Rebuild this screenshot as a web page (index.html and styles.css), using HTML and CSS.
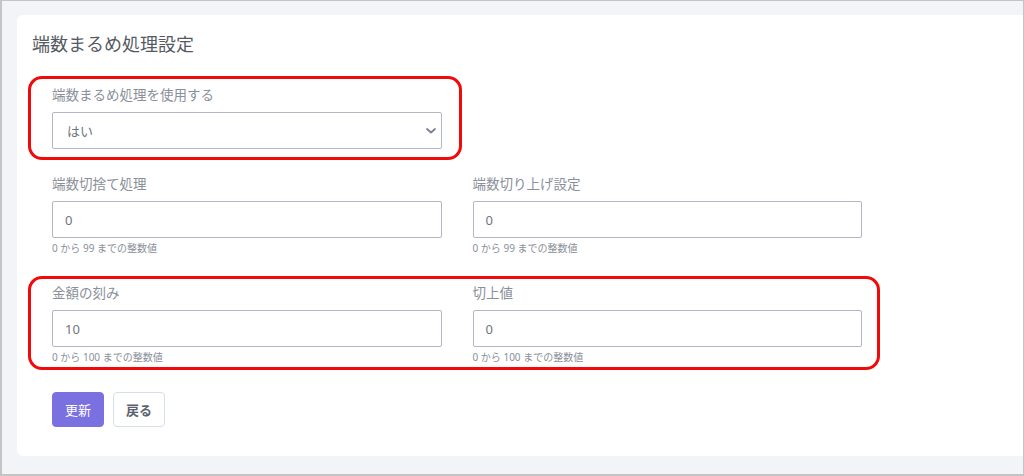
FILE: index.html
```html
<!DOCTYPE html>
<html lang="ja">

<head>
    <meta charset="UTF-8">
    <meta name="viewport" content="width=device-width, initial-scale=1.0">
    <title>端数まるめ処理設定</title>
    <link rel="stylesheet" href="styles.css">
</head>

<body>
    <div class="frame">
        <div class="card">
            <h1 class="title">端数まるめ処理設定</h1>

            <!-- 使用するかどうか -->
            <div class="group group-select marked">
                <div class="field">
                    <label class="label">端数まるめ処理を使用する</label>
                    <div class="select">
                        <span>はい</span>
                        <svg class="chevron" width="12" height="8" viewBox="0 0 12 8">
                            <path d="M2 2 L6 5.5 L10 2" fill="none" stroke="#7a7f94" stroke-width="1.8" stroke-linecap="round" stroke-linejoin="round"/>
                        </svg>
                    </div>
                </div>
            </div>

            <div class="group group-wide">
                <div class="field">
                    <label class="label">端数切捨て処理</label>
                    <div class="input">0</div>
                    <div class="help">0 から 99 までの整数値</div>
                </div>
                <div class="field">
                    <label class="label">端数切り上げ設定</label>
                    <div class="input">0</div>
                    <div class="help">0 から 99 までの整数値</div>
                </div>
            </div>

            <div class="group group-wide marked">
                <div class="field">
                    <label class="label">金額の刻み</label>
                    <div class="input">10</div>
                    <div class="help">0 から 100 までの整数値</div>
                </div>
                <div class="field">
                    <label class="label">切上値</label>
                    <div class="input">0</div>
                    <div class="help">0 から 100 までの整数値</div>
                </div>
            </div>

            <div class="actions">
                <button class="btn btn-primary">更新</button>
                <button class="btn btn-light">戻る</button>
            </div>
        </div>
    </div>
</body>

</html>
```

FILE: styles.css
```css
html, body {
    margin: 0;
    padding: 0;
}

body {
    font-family: 'Noto Sans', 'Noto Sans CJK JP', sans-serif;
    background-color: #f3f4f8;
}

.frame {
    box-sizing: border-box;
    width: 1024px;
    height: 476px;
    border: 1px solid #c4c4c4;
    border-left-width: 2px;
    border-bottom-width: 2px;
    padding: 14px 0 18px 15px;
    background-color: #f3f4f8;
}

.card {
    box-sizing: border-box;
    height: 100%;
    background-color: #fff;
    border-radius: 6px 0 0 6px;
    padding: 16px 0 0 11px;
}

.title {
    margin: 0 0 19px 4px;
    font-size: 18px;
    line-height: 26px;
    font-weight: 400;
    color: #555a62;
}

.group {
    box-sizing: border-box;
    border: 3px solid transparent;
    border-radius: 14px;
    padding: 5px 15px 3px 21px;
    display: flex;
    gap: 31px;
}

.group.marked {
    border-color: #f00a0a;
}

.group-select {
    width: 434px;
    padding-top: 7px;
    padding-bottom: 8px;
    margin-bottom: 7px;
}

.group-wide {
    width: 852px;
    margin-bottom: 15px;
}

.group-wide.marked {
    margin-bottom: 0;
}

.field {
    width: 390px;
}

.label {
    display: block;
    font-size: 13.5px;
    line-height: 18px;
    color: #8a8f99;
    margin-bottom: 8px;
}

.select,
.input {
    box-sizing: border-box;
    height: 37px;
    border: 1.5px solid #b3b6c8;
    border-radius: 2px;
    padding: 0 12px;
    display: flex;
    align-items: center;
    font-size: 13px;
    color: #70757f;
    background-color: #fff;
}

.select {
    justify-content: space-between;
    padding-left: 14px;
    padding-right: 4px;
}

.help {
    font-size: 10px;
    line-height: 13px;
    margin-top: 4px;
    color: #8a8f99;
}

.actions {
    display: flex;
    gap: 9px;
    margin: 22px 0 0 24px;
}

.btn {
    height: 35px;
    padding: 0 12px;
    font-family: inherit;
    font-size: 13px;
    border-radius: 4px;
    cursor: pointer;
}

.btn-primary {
    background-color: #7b70e0;
    border: 1px solid #7b70e0;
    color: #fff;
}

.btn-light {
    background-color: #fff;
    border: 1px solid #d6deec;
    color: #5c6170;
    font-weight: 700;
}
```
